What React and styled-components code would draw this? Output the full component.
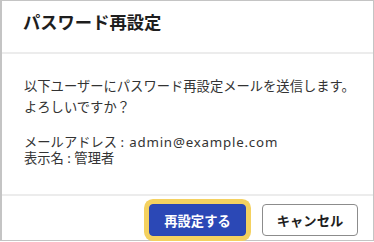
import React from "react";
import styled, { createGlobalStyle } from "styled-components";

const Global = createGlobalStyle`
  html, body { margin: 0; padding: 0; background: #ffffff; }
  body { font-family: "Noto Sans", "Noto Sans CJK JP", sans-serif; }
  * { box-sizing: border-box; }
`;

const Dialog = styled.div`
  width: 374px;
  height: 241px;
  border: 1px solid #c4c4c4;
  border-left-width: 2px;
  background: #ffffff;
  display: flex;
  flex-direction: column;
`;

const Header = styled.div`
  padding: 10px 21px 17px;
  border-bottom: 2px solid #ececec;
`;

const Title = styled.h1`
  margin: 0;
  font-size: 17.3px;
  line-height: 24px;
  font-weight: 700;
  color: #1e1e1e;
`;

const Body = styled.div`
  flex: 1;
  padding: 22px 0 0 22px;
  color: #333333;
  font-size: 13.3px;
`;

const Paragraph = styled.p`
  margin: 0 0 ${(p) => p.$gap || 0}px;
  line-height: ${(p) => p.$lh}px;
  white-space: nowrap;
`;

const Latin = styled.span`
  letter-spacing: 0.8px;
`;

const Footer = styled.div`
  border-top: 2px solid #ececec;
  padding: 8px 15px 4px;
  display: flex;
  justify-content: flex-end;
  gap: 16px;
`;

const Button = styled.button`
  height: 32px;
  width: ${(p) => p.$w}px;
  padding: 0;
  border-radius: 4px;
  font-family: inherit;
  font-size: 13.3px;
  font-weight: 700;
  cursor: pointer;
  border: 1px solid ${(p) => (p.$primary ? "#2a45b3" : "#8c8c8c")};
  background: ${(p) => (p.$primary ? "#2b48b6" : "#ffffff")};
  color: ${(p) => (p.$primary ? "#ffffff" : "#1e1e1e")};
  box-shadow: ${(p) => (p.$primary ? "0 0 0 5px #f4d160" : "none")};
`;

export default function App() {
  return (
    <>
      <Global />
      <Dialog>
        <Header>
          <Title>パスワード再設定</Title>
        </Header>
        <Body>
          <Paragraph $lh={21} $gap={16}>
            以下ユーザーにパスワード再設定メールを送信します。
            <br />
            よろしいですか？
          </Paragraph>
          <Paragraph $lh={16}>
            メールアドレス <Latin>: admin@example.com</Latin>
            <br />
            表示名 : 管理者
          </Paragraph>
        </Body>
        <Footer>
          <Button $primary $w={97}>再設定する</Button>
          <Button $w={96}>キャンセル</Button>
        </Footer>
      </Dialog>
    </>
  );
}
